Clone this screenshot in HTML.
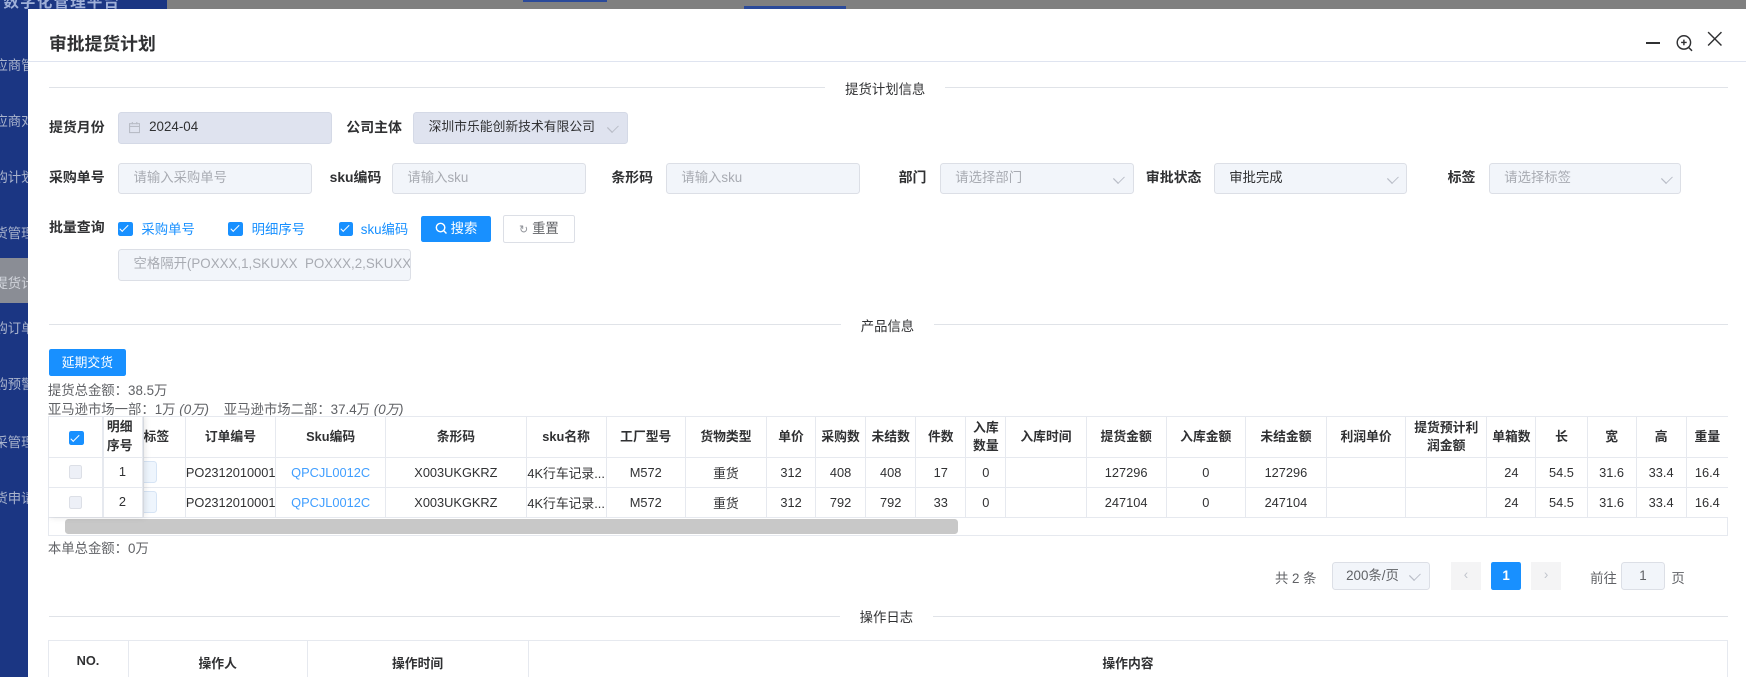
<!DOCTYPE html>
<html><head><meta charset="utf-8"><style>
*{margin:0;padding:0;box-sizing:border-box}
html,body{width:1746px;height:677px;overflow:hidden;background:#fff}
#w{zoom:1.11352;width:1568px;height:608px;position:relative;overflow:hidden;font-family:"Liberation Sans","Noto Sans CJK SC",sans-serif;color:#303133;font-size:12px}
.a{position:absolute}
.side{left:0;top:0;width:25px;height:608px;background:#1b3683;overflow:hidden}
.side div{position:absolute;left:-5px;color:#a9b3cc;font-size:12px;white-space:nowrap}
.lbl{font-weight:bold;font-size:12.5px;color:#303133;line-height:16px}
.inp{height:28px;border:1px solid #dcdfe6;border-radius:3px;background:#f2f5fa;color:#a8abb2;font-size:12px;line-height:26px;padding-left:13px;white-space:nowrap;overflow:hidden}
.dis{background:#dfe3ef;border-color:#d4d9e6;color:#303133}
.arr{position:absolute;right:9px;top:9px;width:7px;height:7px;border-right:1px solid #b8bcc6;border-bottom:1px solid #b8bcc6;transform:rotate(45deg) scale(.9,1.2)}
.div{height:1px;background:#e0e3e8}
.dt{background:#fff;padding:0 18px;font-size:12px;color:#303133}
.cb{width:13px;height:13px;background:#1890ff;border-radius:2px}
.cb:after{content:"";position:absolute;left:4px;top:1.5px;width:3px;height:7px;border-right:1.3px solid #fff;border-bottom:1.3px solid #fff;transform:rotate(45deg)}
.blue{color:#1890ff}
table{border-collapse:collapse;table-layout:fixed}
td,th{border:1px solid #e6e9ef;text-align:center;font-size:11.5px;white-space:nowrap;overflow:hidden;color:#303133}
th{font-weight:bold;height:36px;line-height:16px}
td{height:27px}
.gray{color:#606266;font-size:12px}
</style></head><body><div id="w">
<div class="a" style="left:0;top:0;width:1568px;height:8px;background:#808080"></div>
<div class="a" style="left:470px;top:0;width:75px;height:2px;background:#2b4a9a"></div>
<div class="a" style="left:668px;top:5px;width:92px;height:3px;background:#2b4a9a"></div>
<div class="a side">
<div style="top:49px">应商管</div><div style="top:100px">应商对</div><div style="top:150px">购计划</div><div style="top:200px">货管理</div>
<div style="top:232px;left:0;height:40px;width:25px;background:#8a8d95"></div><div style="top:245px;color:#d0d3da">提货计</div>
<div style="top:286px">购订单</div><div style="top:336px">购预警</div><div style="top:388px">采管理</div><div style="top:438px">货申请</div>
</div>
<div class="a" style="left:0;top:0;width:150px;height:8px;background:#1b3683;overflow:hidden"><div style="position:absolute;top:-9px;left:3px;color:#9fb0d8;font-weight:bold;font-size:14px;letter-spacing:1px">数字化管理平台</div></div>
<div class="a" style="left:25px;top:8px;width:1543px;height:600px;background:#fff"></div>
<div class="a" style="left:44px;top:27px;font-size:16px;font-weight:bold;color:#303133">审批提货计划</div>
<div class="a" style="left:25px;top:55px;width:1543px;height:1px;background:#dfe4f0"></div>
<div class="a" style="left:1478px;top:38px;width:13px;height:1.5px;background:#303133"></div>
<svg class="a" style="left:1504px;top:30px" width="18" height="18" viewBox="0 0 18 18"><circle cx="8" cy="8.5" r="6" fill="none" stroke="#303133" stroke-width="1.3"/><path d="M8 6v5M5.5 8.5h5M12.3 13l3 3" stroke="#303133" stroke-width="1.3"/></svg>
<svg class="a" style="left:1533px;top:28px" width="14" height="14" viewBox="0 0 14 14"><path d="M1 1l12 12M13 1L1 13" stroke="#303133" stroke-width="1.3"/></svg>

<div class="a div" style="left:44px;top:78px;width:1508px"></div>
<div class="a dt" style="left:741px;top:71px">提货计划信息</div>

<div class="a lbl" style="left:44px;top:107px">提货月份</div>
<div class="a inp dis" style="left:106px;top:101px;width:192px;padding-left:27px">2024-04</div>
<svg class="a" style="left:116px;top:110px" width="10" height="10" viewBox="0 0 10 10"><rect x="0.5" y="1.5" width="9" height="8" fill="none" stroke="#b8bcc6"/><path d="M0.5 4h9M3 0v2M7 0v2" stroke="#b8bcc6"/></svg>
<div class="a lbl" style="left:311px;top:107px">公司主体</div>
<div class="a inp dis" style="left:371px;top:101px;width:193px;font-size:11.5px">深圳市乐能创新技术有限公司<span class="arr"></span></div>

<div class="a lbl" style="left:44px;top:152px">采购单号</div>
<div class="a inp" style="left:106px;top:146px;width:174px">请输入采购单号</div>
<div class="a lbl" style="left:296px;top:152px">sku编码</div>
<div class="a inp" style="left:352px;top:146px;width:174px">请输入sku</div>
<div class="a lbl" style="left:549px;top:152px">条形码</div>
<div class="a inp" style="left:598px;top:146px;width:174px">请输入sku</div>
<div class="a lbl" style="left:807px;top:152px">部门</div>
<div class="a inp" style="left:844px;top:146px;width:174px">请选择部门<span class="arr"></span></div>
<div class="a lbl" style="left:1029px;top:152px">审批状态</div>
<div class="a inp" style="left:1090px;top:146px;width:174px;color:#303133">审批完成<span class="arr"></span></div>
<div class="a lbl" style="left:1300px;top:152px">标签</div>
<div class="a inp" style="left:1337px;top:146px;width:173px">请选择标签<span class="arr"></span></div>

<div class="a lbl" style="left:44px;top:197px">批量查询</div>
<div class="a cb" style="left:106px;top:199px"></div><div class="a blue" style="left:127px;top:197px">采购单号</div>
<div class="a cb" style="left:205px;top:199px"></div><div class="a blue" style="left:226px;top:197px">明细序号</div>
<div class="a cb" style="left:304px;top:199px"></div><div class="a blue" style="left:324px;top:197px">sku编码</div>
<div class="a" style="left:378px;top:194px;width:63px;height:23px;background:#1890ff;border-radius:2px;color:#fff;font-size:12px;line-height:23px;text-align:center">
<svg width="11" height="11" viewBox="0 0 11 11" style="vertical-align:-1px"><circle cx="5" cy="5" r="3.8" fill="none" stroke="#fff" stroke-width="1.3"/><path d="M7.8 7.8l2.5 2.5" stroke="#fff" stroke-width="1.3"/></svg> 搜索</div>
<div class="a" style="left:452px;top:193px;width:64px;height:25px;border:1px solid #dcdfe6;border-radius:2px;color:#606266;font-size:12px;line-height:23px;text-align:center"><span style="font-size:10px;color:#909399">↻</span> 重置</div>
<div class="a inp" style="left:106px;top:224px;width:263px;color:#a8abb2">空格隔开(POXXX,1,SKUXX&nbsp; POXXX,2,SKUXX</div>

<div class="a div" style="left:44px;top:291px;width:1508px"></div>
<div class="a dt" style="left:755px;top:284px">产品信息</div>

<div class="a" style="left:44px;top:313px;width:69px;height:25px;background:#1890ff;border-radius:2px;color:#fff;font-size:11.5px;line-height:25px;text-align:center">延期交货</div>
<div class="a gray" style="left:43px;top:341px">提货总金额：38.5万</div>
<div class="a gray" style="left:43px;top:358px">亚马逊市场一部：1万 <i>(0万)</i>&nbsp;&nbsp;&nbsp;&nbsp;亚马逊市场二部：37.4万 <i>(0万)</i></div>

<div class="a" style="left:43px;top:374px;width:1509px;height:107px;overflow:hidden;border-bottom:1px solid #e6e9ef">
<table style="width:1509px">
<colgroup><col style="width:50px"><col style="width:35px"><col style="width:38px"><col style="width:81px"><col style="width:99px"><col style="width:126px"><col style="width:72px"><col style="width:71px"><col style="width:73px"><col style="width:44px"><col style="width:45px"><col style="width:45px"><col style="width:45px"><col style="width:36px"><col style="width:72px"><col style="width:72px"><col style="width:71px"><col style="width:73px"><col style="width:71px"><col style="width:73px"><col style="width:44px"><col style="width:46px"><col style="width:44px"><col style="width:45px"><col style="width:38px"></colgroup>
<tr><th></th><th></th><th style="text-align:left">标签</th><th>订单编号</th><th>Sku编码</th><th>条形码</th><th>sku名称</th><th>工厂型号</th><th>货物类型</th><th>单价</th><th>采购数</th><th>未结数</th><th>件数</th><th>入库<br>数量</th><th>入库时间</th><th>提货金额</th><th>入库金额</th><th>未结金额</th><th>利润单价</th><th>提货预计利<br>润金额</th><th>单箱数</th><th>长</th><th>宽</th><th>高</th><th>重量</th></tr>
<tr><td></td><td></td><td><div style="width:12px;height:20px;border:1px solid #d6e4f5;border-left:0;border-radius:0 3px 3px 0;background:#eef5fd"></div></td><td>PO2312010001</td><td style="color:#409eff">QPCJL0012C</td><td>X003UKGKRZ</td><td>4K行车记录...</td><td>M572</td><td>重货</td><td>312</td><td>408</td><td>408</td><td>17</td><td>0</td><td></td><td>127296</td><td>0</td><td>127296</td><td></td><td></td><td>24</td><td>54.5</td><td>31.6</td><td>33.4</td><td>16.4</td></tr>
<tr><td></td><td></td><td><div style="width:12px;height:20px;border:1px solid #d6e4f5;border-left:0;border-radius:0 3px 3px 0;background:#eef5fd"></div></td><td>PO2312010001</td><td style="color:#409eff">QPCJL0012C</td><td>X003UKGKRZ</td><td>4K行车记录...</td><td>M572</td><td>重货</td><td>312</td><td>792</td><td>792</td><td>33</td><td>0</td><td></td><td>247104</td><td>0</td><td>247104</td><td></td><td></td><td>24</td><td>54.5</td><td>31.6</td><td>33.4</td><td>16.4</td></tr>
</table>
<div class="a" style="left:0;top:90px;width:1509px;height:17px;border-left:1px solid #e6e9ef;border-right:1px solid #e6e9ef"></div>
<div class="a" style="left:15px;top:92px;width:802px;height:14px;background:#c8c8c8;border-radius:3px"></div>
<div class="a" style="left:0;top:0;width:85px;height:90px;background:#fff;box-shadow:2px 0 6px rgba(0,0,0,.12)">
<div class="a" style="left:0;top:0;width:50px;height:90px;border:1px solid #e6e9ef;border-bottom:0"></div>
<div class="a" style="left:49px;top:0;width:36px;height:90px;border:1px solid #e6e9ef;border-bottom:0"></div>
<div class="a" style="left:0;top:36px;width:85px;height:1px;background:#e6e9ef"></div>
<div class="a" style="left:0;top:63px;width:85px;height:1px;background:#e6e9ef"></div>
<div class="a cb" style="left:19px;top:13px"></div>
<div class="a" style="left:53px;top:1px;font-weight:bold;font-size:11.5px;line-height:17px">明细<br>序号</div>
<div class="a" style="left:19px;top:44px;width:12px;height:12px;border:1px solid #dcdfe6;background:#edf0f7;border-radius:2px"></div>
<div class="a" style="left:19px;top:71px;width:12px;height:12px;border:1px solid #dcdfe6;background:#edf0f7;border-radius:2px"></div>
<div class="a" style="left:49px;top:43px;width:36px;text-align:center;font-size:11.5px">1</div>
<div class="a" style="left:49px;top:70px;width:36px;text-align:center;font-size:11.5px">2</div>
</div>
</div>
<div class="a gray" style="left:43px;top:483px">本单总金额：0万</div>

<div class="a" style="left:1145px;top:510px;color:#606266;font-size:12px">共 2 条</div>
<div class="a inp" style="left:1196px;top:505px;width:88px;height:25px;line-height:23px;color:#606266;padding-left:12px">200条/页<span class="arr" style="top:7px"></span></div>
<div class="a" style="left:1303px;top:505px;width:27px;height:25px;background:#f4f4f5;color:#c0c4cc;text-align:center;line-height:24px">‹</div>
<div class="a" style="left:1339px;top:505px;width:27px;height:25px;background:#1890ff;color:#fff;text-align:center;line-height:25px;font-weight:bold;border-radius:2px">1</div>
<div class="a" style="left:1375px;top:505px;width:27px;height:25px;background:#f4f4f5;color:#c0c4cc;text-align:center;line-height:24px">›</div>
<div class="a" style="left:1428px;top:510px;color:#606266">前往</div>
<div class="a inp" style="left:1456px;top:505px;width:39px;height:25px;line-height:23px;color:#606266;padding:0;text-align:center">1</div>
<div class="a" style="left:1501px;top:510px;color:#606266">页</div>

<div class="a div" style="left:44px;top:553px;width:1508px"></div>
<div class="a dt" style="left:754px;top:545px">操作日志</div>

<div class="a" style="left:43px;top:575px;width:1509px;height:40px;border:1px solid #e6e9ef;border-bottom:0"></div>
<div class="a" style="left:115px;top:575px;width:1px;height:40px;background:#e6e9ef"></div>
<div class="a" style="left:276px;top:575px;width:1px;height:40px;background:#e6e9ef"></div>
<div class="a" style="left:474px;top:575px;width:1px;height:40px;background:#e6e9ef"></div>
<div class="a" style="left:43px;top:586px;width:72px;text-align:center;font-weight:bold;font-size:11.5px">NO.</div>
<div class="a" style="left:115px;top:586px;width:161px;text-align:center;font-weight:bold;font-size:11.5px">操作人</div>
<div class="a" style="left:276px;top:586px;width:198px;text-align:center;font-weight:bold;font-size:11.5px">操作时间</div>
<div class="a" style="left:474px;top:586px;width:1078px;text-align:center;font-weight:bold;font-size:11.5px">操作内容</div>
</div></body></html>
